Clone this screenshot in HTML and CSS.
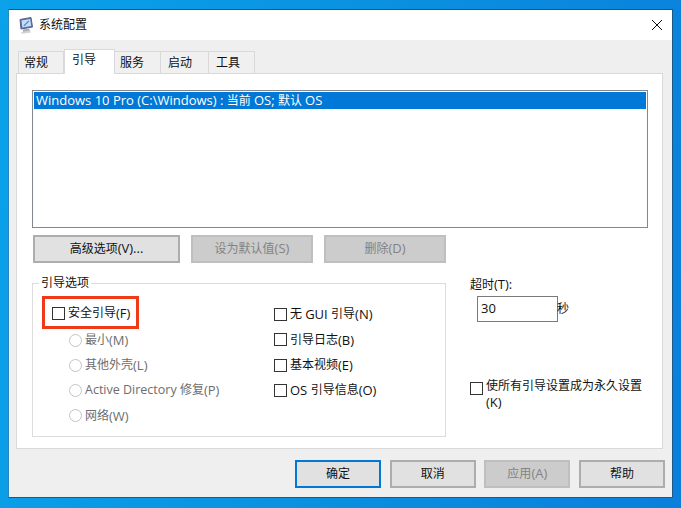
FILE: index.html
```html
<!DOCTYPE html>
<html lang="zh-CN">
<head>
<meta charset="utf-8">
<title>系统配置</title>
<link rel="stylesheet" href="styles.css">
</head>
<body>
<div class="window">
  <header class="titlebar">
    <svg class="app-icon" width="16" height="18" viewBox="0 0 16 18">
      <path d="M2 3.5 13 1.5 14.5 11 3 13Z" fill="#5b6fb0" stroke="#5a5f90" stroke-width="1"/>
      <path d="M3.5 4.6 12.2 3 13.2 10 4.4 11.6Z" fill="#c4def4"/>
      <path d="M5.5 9.5 10.5 4.5 11.3 5.3 6.3 10.3Z" fill="#3f7fd0"/>
      <path d="M5 13.5 11 12.5 12 15 5 16.5Z" fill="#aab0b8"/>
      <path d="M3 16 12 14.6 13 16.5 4 17.8Z" fill="#cfd2d6"/>
    </svg>
    <span class="title">系统配置</span>
    <svg class="close" width="10" height="10" viewBox="0 0 10 10"><path d="M0 0 10 10M10 0 0 10" stroke="#111" stroke-width="1" fill="none"/></svg>
  </header>
  <div class="content">
    <nav class="tabs">
      <span class="tab t1">常规</span>
      <span class="tab t2 active">引导</span>
      <span class="tab t3">服务</span>
      <span class="tab t4">启动</span>
      <span class="tab t5">工具</span>
    </nav>
    <section class="panel">
      <div class="listbox"><div class="list-item"><span class="lat">Windows 10 Pro (C:\Windows) : </span>当前 <span class="lat">OS; </span>默认 <span class="lat">OS</span></div></div>
      <div class="list-actions">
        <button class="btn a1">高级选项<span class="lat">(V)...</span></button>
        <button class="btn a2 disabled">设为默认值<span class="lat">(S)</span></button>
        <button class="btn a3 disabled">删除<span class="lat">(D)</span></button>
      </div>
      <div class="options">
        <fieldset class="group">
          <legend>引导选项</legend>
          <div class="col-left">
            <div class="highlight"><label class="row"><span class="check"></span>安全引导<span class="lat">(F)</span></label></div>
            <label class="row radio-row"><span class="radio"></span>最小<span class="lat">(M)</span></label>
            <label class="row radio-row"><span class="radio"></span>其他外壳<span class="lat">(L)</span></label>
            <label class="row radio-row"><span class="radio"></span><span class="lat-narrow">Active Directory&nbsp;</span>修复<span class="lat">(P)</span></label>
            <label class="row radio-row"><span class="radio"></span>网络<span class="lat">(W)</span></label>
          </div>
          <div class="col-right">
            <label class="row"><span class="check"></span>无&nbsp;<span class="lat">GUI&nbsp;</span>引导<span class="lat">(N)</span></label>
            <label class="row"><span class="check"></span>引导日志<span class="lat">(B)</span></label>
            <label class="row"><span class="check"></span>基本视频<span class="lat">(E)</span></label>
            <label class="row"><span class="check"></span><span class="lat">OS&nbsp;</span>引导信息<span class="lat">(O)</span></label>
          </div>
        </fieldset>
        <div class="side">
          <div class="timeout-label">超时<span class="lat">(T):</span></div>
          <div class="timeout"><div class="input"><span class="lat">30</span></div><span class="unit">秒</span></div>
          <label class="permanent"><span class="check"></span><span class="permanent-text">使所有引导设置成为永久设置 <span class="lat">(K)</span></span></label>
        </div>
      </div>
    </section>
    <footer class="footer">
      <button class="btn primary">确定</button>
      <button class="btn">取消</button>
      <button class="btn disabled">应用<span class="lat">(A)</span></button>
      <button class="btn">帮助</button>
    </footer>
  </div>
</div>
</body>
</html>
```
FILE: styles.css
```css
* { box-sizing: border-box; }
html, body { margin: 0; height: 100%; }
body {
  width: 681px; height: 508px; overflow: hidden;
  background: linear-gradient(100deg, #0aa2ea 0%, #0a8fdf 55%, #0a7fdc 100%);
  font: 12px/16px "Open Sans", "Noto Sans CJK SC", sans-serif;
  color: #111;
  padding: 9px 8px 10px 8px;
}
.lat { font-size: 13px; }
.lat-narrow { font-size: 12.5px; }
.window {
  width: 665px; height: 489px;
  background: #fff;
  border: 1px solid #1b5b83;
  border-left-color: #2a86c0;
  display: flex; flex-direction: column;
}
.titlebar {
  height: 30px; flex: none;
  display: flex; align-items: center;
  padding-left: 9px; background: #fff;
}
.app-icon { flex: none; }
.title { margin-left: 5px; color: #111; }
.close { margin-left: auto; margin-right: 10px; }
.content { flex: 1; background: #efefef; padding: 9px 9px 0 7px; }
.tabs { display: flex; height: 24px; align-items: flex-end; padding-left: 2px; }
.tab {
  height: 22px; display: flex; align-items: center;
  background: #f0f0f0; border: 1px solid #d9d9d9; border-bottom: 0; border-left: 0;
  padding: 1px 0 0 6px;
}
.t1 { width: 46px; border-left: 1px solid #d9d9d9; padding-left: 5px; }
.t2 { width: 51px; height: 25px; background: #fff; border-left: 1px solid #d9d9d9; margin-bottom: -1px; position: relative; z-index: 1; padding: 0 0 4px 7px; }
.t3 { width: 46px; padding-left: 5px; }
.t4 { width: 48px; padding-left: 7px; }
.t5 { width: 46px; padding-left: 7px; }
.panel {
  height: 376px; width: 647px;
  background: #fff; border: 1px solid #d9d9d9;
  padding: 16px 15px 0 15px;
}
.listbox { height: 138px; width: 616px; border: 1px solid #828790; padding: 1px; }
.list-item { height: 17px; background: #0078d7; color: #fff; line-height: 17px; padding-left: 2px; white-space: nowrap; }
.list-actions { display: flex; margin-top: 7px; padding-left: 1px; }
.btn {
  flex: none;
  font: inherit; color: #111;
  width: 86px; height: 28px; padding: 0 0 1px;
  background: #e1e1e1; border: 2px solid #adadad; border-radius: 0;
}
.btn.disabled { background: #ccc; border-color: #bfbfbf; color: #838383; }
.btn.primary { border-color: #0078d7; }
.a1 { width: 147px; }
.a2 { width: 122px; margin-left: 11px; }
.a3 { width: 122px; margin-left: 11px; }
.options { display: flex; margin-top: 20px; }
.group {
  position: relative;
  margin: 0; padding: 0 0 0 9px; min-width: 0;
  width: 415px; height: 154px;
  border: 1px solid #dcdcdc;
  display: flex;
}
.group legend { position: absolute; top: -9px; left: 6px; padding: 0 2px; background: #fff; line-height: 16px; }
.col-left { width: 232px; padding-top: 12px; color: #6d6d6d; }
.col-right { padding-top: 17.6px; }
.row { display: flex; align-items: center; height: 25.4px; white-space: nowrap; }
.radio-row { height: 25.2px; padding-left: 27px; }
.highlight { width: 97px; height: 33px; border: 3px solid #f03a17; padding: 3px 0 0 7px; color: #111; margin-bottom: -1.6px; }
.highlight .row { height: 22px; }
.check { flex: none; width: 13px; height: 13px; border: 1px solid #333; background: #fff; margin-right: 3px; }
.radio { flex: none; width: 13px; height: 13px; border: 1px solid #c4c4c4; border-radius: 50%; background: #fff; margin-right: 3px; }
.side { margin-left: 24px; width: 177px; }
.timeout-label { margin-top: -7px; height: 16px; }
.timeout { display: flex; align-items: center; margin: 4px 0 0 7px; }
.input { flex: none; width: 81px; height: 26px; border: 1px solid #7a7a7a; padding: 2px 3px; line-height: 18px; }
.unit { margin-left: -1px; }
.permanent { display: flex; align-items: flex-start; margin-top: 55px; }
.permanent .check { margin-top: 5px; }
.permanent-text { width: 168px; line-height: 17px; }
.footer { display: flex; gap: 8.67px; margin-top: 11px; padding-left: 279px; }
```
